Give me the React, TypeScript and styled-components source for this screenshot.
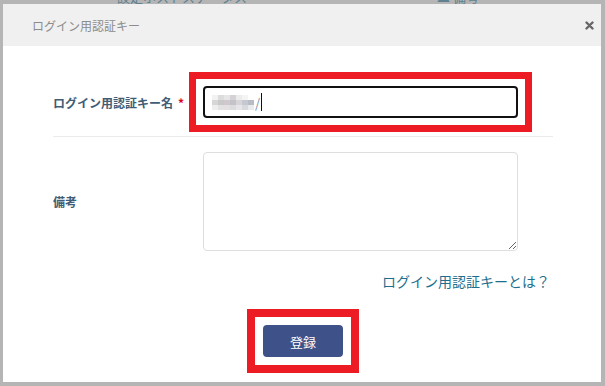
import styled, { createGlobalStyle } from "styled-components";

const GlobalStyle = createGlobalStyle`
  html, body {
    margin: 0;
    padding: 0;
    background: #b5b5b5;
    font-family: "Noto Sans CJK JP", "Noto Sans", sans-serif;
  }
`;

const Page = styled.div`
  width: 605px;
  height: 386px;
  overflow: hidden;
  background: #b5b5b5;
`;

const Backdrop = styled.div`
  height: 4px;
  overflow: hidden;
  display: flex;
  padding-left: 117px;
  gap: 190px;
`;

const BackdropText = styled.span`
  display: block;
  margin-top: -11px;
  font-size: 13px;
  line-height: 16px;
  color: #5f8190;
  white-space: nowrap;
`;

const Modal = styled.div`
  margin-left: 3px;
  width: 598px;
  height: 378px;
  background: #ffffff;
  display: flex;
  flex-direction: column;
`;

const Header = styled.header`
  height: 42px;
  flex: 0 0 42px;
  background: #f0f0f0;
  display: flex;
  align-items: center;
  justify-content: space-between;
  padding: 0 7px 0 29px;
`;

const Title = styled.h4`
  margin: 0;
  font-size: 12px;
  font-weight: 400;
  color: #8c8c8c;
`;

const CloseButton = styled.button`
  border: 0;
  background: none;
  padding: 0;
  width: 9px;
  height: 9px;
  display: flex;
  cursor: pointer;
`;

const Body = styled.div`
  padding: 26px 48px 0 50px;
  display: flex;
  flex-direction: column;
`;

const FormRow = styled.div<{ $divided?: boolean }>`
  display: grid;
  grid-template-columns: 150px 315px;
  align-items: center;
  padding-bottom: ${(p) => (p.$divided ? "4px" : "0")};
  border-bottom: ${(p) => (p.$divided ? "1px solid #ebebeb" : "none")};
  & + & {
    padding-top: 15px;
  }
`;

const Label = styled.label`
  font-size: 12px;
  font-weight: 700;
  color: #3f5d76;
`;

const Required = styled.span`
  color: #e0001b;
  margin-left: 5px;
`;

const Highlight = styled.div<{ $gap: number }>`
  border: ${(p) => p.$gap}px solid #ed1c24;
  padding: ${(p) => p.$gap}px;
  margin-left: ${(p) => -2 * p.$gap}px;
  background: #fff;
  width: fit-content;
`;

const KeyInput = styled.div`
  box-sizing: border-box;
  width: 315px;
  height: 32px;
  border: 2px solid #111;
  border-radius: 4px;
  display: flex;
  align-items: center;
  padding-left: 7px;
  gap: 1px;
`;

const Mosaic = styled.div`
  display: grid;
  grid-template-columns: repeat(7, 6px);
  grid-auto-rows: 5px;
`;

const Block = styled.span<{ $shade: string }>`
  background: ${(p) => p.$shade};
`;

const Slash = styled.span`
  font-size: 13px;
  color: #7d8ea6;
  line-height: 1;
`;

const Caret = styled.span`
  width: 1px;
  height: 18px;
  background: #111;
`;

const NoteArea = styled.textarea`
  box-sizing: border-box;
  width: 315px;
  height: 99px;
  border: 1px solid #dedede;
  border-radius: 4px;
  font-family: inherit;
  display: block;
`;

const HelpRow = styled.div`
  display: flex;
  justify-content: flex-end;
  margin-top: 20px;
  padding-right: 3px;
`;

const HelpLink = styled.a`
  font-size: 14px;
  line-height: 20px;
  color: #1e6f8d;
  text-decoration: none;
  cursor: pointer;
`;

const Footer = styled.div`
  display: flex;
  justify-content: center;
  margin-top: 18px;
`;

const SubmitButton = styled.button`
  width: 80px;
  height: 32px;
  border: 0;
  border-radius: 4px;
  background: #3f5189;
  color: #fff;
  font-family: inherit;
  font-size: 13px;
  cursor: pointer;
`;

const mosaicShades = [
  "#f2f2f2", "#dcdcdc", "#e6e6e6", "#d4d2d6", "#ececec", "#f4f4f4", "#ffffff",
  "#d6d6d6", "#c9c9cc", "#cfc8cc", "#c4c4c8", "#d8d4d8", "#c6c8cf", "#b9bcc6",
  "#eeeeee", "#e2e2e2", "#e4e0e2", "#dcdcdf", "#e6e6e8", "#d8d9de", "#e8eaee",
];

const App = () => {
  return (
    <Page>
      <GlobalStyle />
      <Backdrop>
        <BackdropText>設定ホストステータス</BackdropText>
        <BackdropText>▲ 備考</BackdropText>
      </Backdrop>
      <Modal>
        <Header>
          <Title>ログイン用認証キー</Title>
          <CloseButton aria-label="閉じる">
            <svg width="9" height="9" viewBox="0 0 9 9">
              <path
                d="M1.5 1.5 L7.5 7.5 M7.5 1.5 L1.5 7.5"
                stroke="#666"
                strokeWidth="2.4"
                strokeLinecap="round"
              />
            </svg>
          </CloseButton>
        </Header>
        <Body>
          <FormRow $divided>
            <Label>
              ログイン用認証キー名<Required>*</Required>
            </Label>
            <Highlight $gap={7}>
              <KeyInput>
                <Mosaic>
                  {mosaicShades.map((shade, i) => (
                    <Block key={i} $shade={shade} />
                  ))}
                </Mosaic>
                <Slash>/</Slash>
                <Caret />
              </KeyInput>
            </Highlight>
          </FormRow>
          <FormRow>
            <Label>備考</Label>
            <NoteArea />
          </FormRow>
          <HelpRow>
            <HelpLink>ログイン用認証キーとは？</HelpLink>
          </HelpRow>
          <Footer>
            <Highlight $gap={8} style={{ marginLeft: 0 }}>
              <SubmitButton>登録</SubmitButton>
            </Highlight>
          </Footer>
        </Body>
      </Modal>
    </Page>
  );
};

export default App;
